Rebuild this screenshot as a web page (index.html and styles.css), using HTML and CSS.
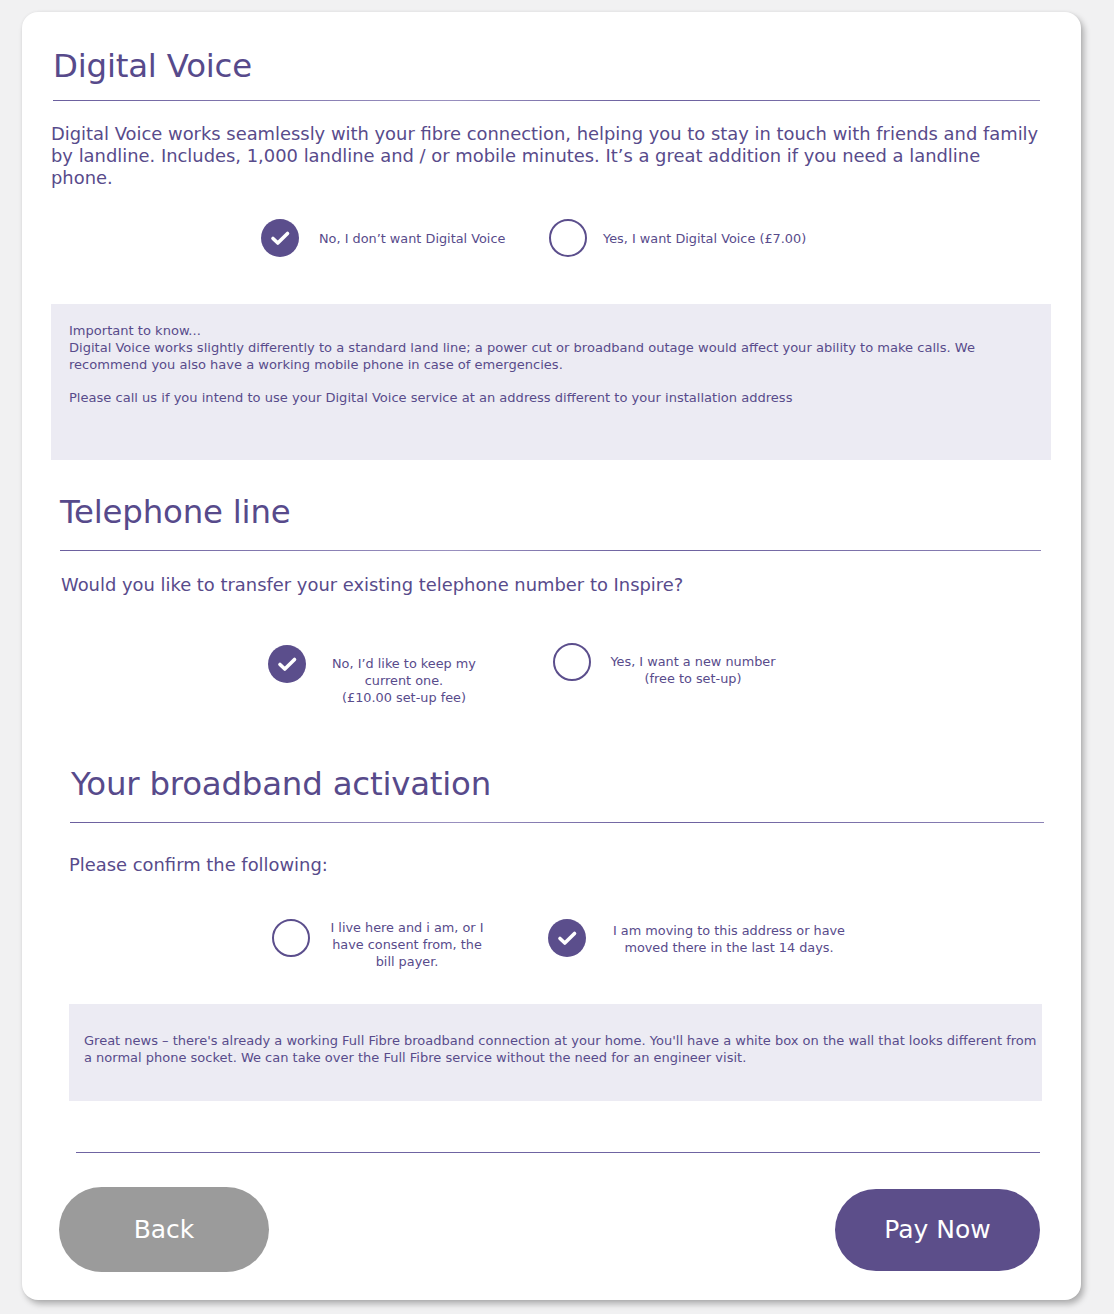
FILE: index.html
```html
<!DOCTYPE html>
<html lang="en">
<head>
<meta charset="utf-8">
<title>Digital Voice</title>
<link rel="stylesheet" href="styles.css">
</head>
<body>
<main class="card">
  <section class="sec sec-voice">
    <h2 class="title">Digital Voice</h2>
    <div class="rule rule-voice"></div>
    <p class="lead">Digital Voice works seamlessly with your fibre connection, helping you to stay in touch with friends and family by landline. Includes, 1,000 landline and / or mobile minutes. It’s a great addition if you need a landline phone.</p>
    <div class="choices choices-voice">
      <div class="opt opt-v1">
        <span class="radio checked"><svg viewBox="0 0 38 38" width="38" height="38"><path d="M12 19.5 L16.8 24 L26.5 14.5" fill="none" stroke="#fff" stroke-width="3.6" stroke-linecap="round" stroke-linejoin="round"/></svg></span>
        <span class="label label-v1">No, I don’t want Digital Voice</span>
      </div>
      <div class="opt opt-v2">
        <span class="radio"></span>
        <span class="label label-v2">Yes, I want Digital Voice (£7.00)</span>
      </div>
    </div>
    <div class="info info-voice">
      <p>Important to know...<br>Digital Voice works slightly differently to a standard land line; a power cut or broadband outage would affect your ability to make calls. We recommend you also have a working mobile phone in case of emergencies.</p>
      <p>Please call us if you intend to use your Digital Voice service at an address different to your installation address</p>
    </div>
  </section>

  <section class="sec sec-phone">
    <h2 class="title">Telephone line</h2>
    <div class="rule rule-phone"></div>
    <p class="question">Would you like to transfer your existing telephone number to Inspire?</p>
    <div class="choices choices-phone">
      <div class="opt opt-p1">
        <span class="radio checked"><svg viewBox="0 0 38 38" width="38" height="38"><path d="M12 19.5 L16.8 24 L26.5 14.5" fill="none" stroke="#fff" stroke-width="3.6" stroke-linecap="round" stroke-linejoin="round"/></svg></span>
        <span class="label centred label-p1">No, I’d like to keep my<br>current one.<br>(£10.00 set-up fee)</span>
      </div>
      <div class="opt opt-p2">
        <span class="radio"></span>
        <span class="label centred label-p2">Yes, I want a new number<br>(free to set-up)</span>
      </div>
    </div>
  </section>

  <section class="sec sec-bb">
    <h2 class="title">Your broadband activation</h2>
    <div class="rule rule-bb"></div>
    <p class="question">Please confirm the following:</p>
    <div class="choices choices-bb">
      <div class="opt opt-b1">
        <span class="radio"></span>
        <span class="label centred label-b1">I live here and i am, or I<br>have consent from, the<br>bill payer.</span>
      </div>
      <div class="opt opt-b2">
        <span class="radio checked"><svg viewBox="0 0 38 38" width="38" height="38"><path d="M12 19.5 L16.8 24 L26.5 14.5" fill="none" stroke="#fff" stroke-width="3.6" stroke-linecap="round" stroke-linejoin="round"/></svg></span>
        <span class="label centred label-b2">I am moving to this address or have<br>moved there in the last 14 days.</span>
      </div>
    </div>
    <div class="info info-bb">
      <p>Great news – there's already a working Full Fibre broadband connection at your home. You'll have a white box on the wall that looks different from a normal phone socket. We can take over the Full Fibre service without the need for an engineer visit.</p>
    </div>
  </section>

  <div class="rule rule-foot"></div>
  <div class="actions">
    <button class="btn btn-back" type="button">Back</button>
    <button class="btn btn-pay" type="button">Pay Now</button>
  </div>
</main>
</body>
</html>
```

FILE: styles.css
```css
* { box-sizing: border-box; }
html, body { margin: 0; padding: 0; }
body {
  background: #f1f1f2;
  font-family: "DejaVu Sans", "Noto Sans", sans-serif;
  color: #584b8b;
  width: 1114px;
  height: 1314px;
  overflow: hidden;
}
.card {
  margin: 12px 0 0 22px;
  width: 1059px;
  height: 1288px;
  background: #fff;
  border-radius: 16px;
  box-shadow: 3px 4px 6px rgba(0,0,0,0.28), 0 0 3px rgba(0,0,0,0.06);
  padding-top: 34px;
}
.title {
  margin: 0;
  font-weight: normal;
  font-size: 32.4px;
  line-height: 40px;
  color: #574a8b;
  letter-spacing: -0.2px;
}
.rule {
  height: 1px;
  background: linear-gradient(90deg, #6b5f9e, #9990bf 40%, #6b5f9e 60%, #8c83b6);
}
p { margin: 0; }

/* Section 1 */
.sec-voice { padding-left: 31px; }
.sec-voice .title { padding-left: 0; }
.rule-voice { margin-top: 14px; width: 987px; }
.lead {
  margin-top: 22px;
  margin-left: -2px;
  width: 990px;
  font-size: 17.9px;
  line-height: 22px;
}
.choices { display: flex; }
.choices-voice { margin-top: 30px; padding-left: 208px; }
.opt { display: flex; }
.radio {
  flex: none;
  width: 38px;
  height: 38px;
  border-radius: 50%;
  border: 2.5px solid #5b4e8c;
  display: block;
}
.radio.checked {
  background: #5b4e8c;
  border: none;
}
.radio svg { display: block; }
.label {
  font-size: 12.85px;
  line-height: 17px;
  white-space: nowrap;
}
.centred { text-align: center; }
.opt-v1 { width: 288px; align-items: center; }
.opt-v2 { align-items: center; }
.label-v1 { margin-left: 20px; }
.label-v2 { margin-left: 16px; }

.info {
  background: #ecebf3;
  line-height: 16.8px;
}
.info-voice {
  margin-top: 47px;
  margin-left: -2px;
  width: 1000px;
  height: 156px;
  padding: 19px 16px 0 18px;
  font-size: 13.05px;
}
.info-voice p + p { margin-top: 16.5px; }

/* Section 2 */
.sec-phone { padding-left: 38px; margin-top: 32px; }
.rule-phone { margin-top: 18px; width: 981px; }
.question {
  margin-top: 23px;
  font-size: 17.9px;
  line-height: 22px;
}
.sec-phone .question { margin-left: 1px; }
.choices-phone { margin-top: 49px; padding-left: 208px; }
.opt-p1 { width: 285px; }
.label-p1 { width: 178px; margin-left: 9px; margin-top: 10px; }
.opt-p2 { margin-top: -2px; }
.label-p2 { width: 200px; margin-left: 2px; margin-top: 10px; }

/* Section 3 */
.sec-bb { padding-left: 48px; margin-top: 58px; }
.sec-bb .title { padding-left: 1px; }
.rule-bb { margin-top: 18px; width: 974px; }
.sec-bb .question { margin-top: 31px; margin-left: -1px; }
.choices-bb { margin-top: 43px; padding-left: 202px; }
.opt-b1 { width: 276px; }
.label-b1 { width: 190px; margin-left: 2px; margin-top: 0; }
.label-b2 { width: 286px; margin-left: 0; margin-top: 3px; }
.info-bb {
  margin-top: 34px;
  margin-left: -1px;
  width: 973px;
  height: 97px;
  padding: 29px 2px 0 15px;
  font-size: 13px;
  line-height: 16.5px;
}

/* Footer */
.rule-foot {
  margin: 51px 0 0 54px;
  width: 964px;
  background: #6f64a2;
}
.actions {
  display: flex;
  justify-content: space-between;
  align-items: center;
  margin-top: 34px;
  padding: 0 41px 0 37px;
}
.btn {
  border: none;
  color: #fff;
  font-family: "DejaVu Sans", "Noto Sans", sans-serif;
  font-size: 25px;
  cursor: pointer;
}
.btn-back {
  width: 210px;
  height: 85px;
  border-radius: 42.5px;
  background: #9b9b9b;
}
.btn-pay {
  width: 205px;
  height: 82px;
  border-radius: 41px;
  background: #5c4e8a;
}
```
